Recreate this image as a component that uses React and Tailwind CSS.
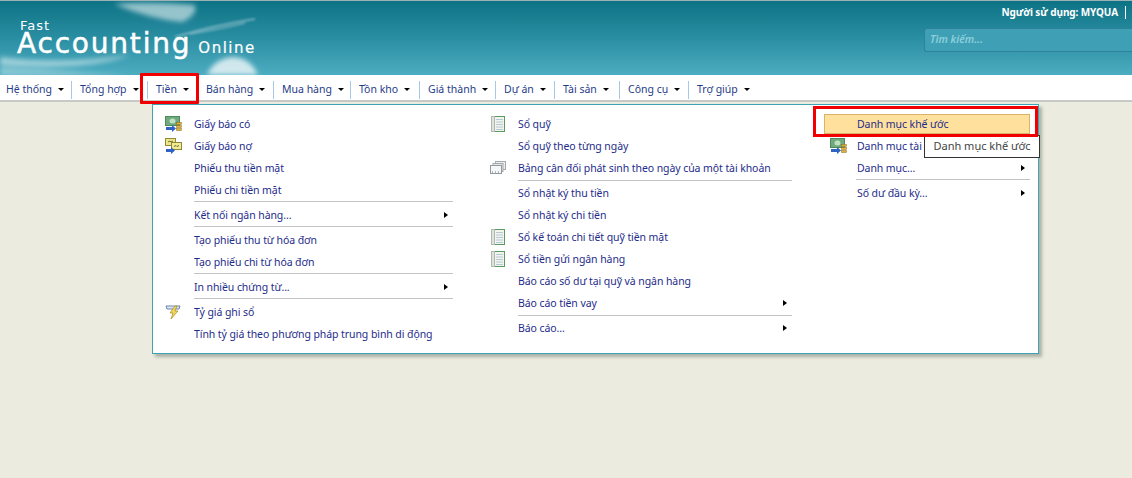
const topMenu = [
  { label: "Hệ thống", width: "w-[72px]", pad: "pl-[6px]" },
  { label: "Tổng hợp", width: "w-[76px]", pad: "pl-[8px]" },
  { label: "Tiền", width: "w-[50px]", pad: "pl-[8px]" },
  { label: "Bán hàng", width: "w-[76px]", pad: "pl-[8px]" },
  { label: "Mua hàng", width: "w-[77px]", pad: "pl-[8px]" },
  { label: "Tồn kho", width: "w-[69px]", pad: "pl-[8px]" },
  { label: "Giá thành", width: "w-[76px]", pad: "pl-[8px]" },
  { label: "Dự án", width: "w-[59px]", pad: "pl-[8px]" },
  { label: "Tài sản", width: "w-[65px]", pad: "pl-[8px]" },
  { label: "Công cụ", width: "w-[69px]", pad: "pl-[8px]" },
  { label: "Trợ giúp", width: "w-[70px]", pad: "pl-[8px]", last: true },
];

const col1 = [
  { label: "Giấy báo có", icon: "money" },
  { label: "Giấy báo nợ", icon: "notes" },
  { label: "Phiếu thu tiền mặt" },
  { label: "Phiếu chi tiền mặt" },
  { sep: true },
  { label: "Kết nối ngân hàng...", more: true },
  { sep: true },
  { label: "Tạo phiếu thu từ hóa đơn" },
  { label: "Tạo phiếu chi từ hóa đơn" },
  { sep: true },
  { label: "In nhiều chứng từ...", more: true },
  { sep: true },
  { label: "Tỷ giá ghi sổ", icon: "bolt" },
  { label: "Tính tỷ giá theo phương pháp trung bình di động" },
];

const col2 = [
  { label: "Sổ quỹ", icon: "book" },
  { label: "Sổ quỹ theo từng ngày" },
  { label: "Bảng cân đối phát sinh theo ngày của một tài khoản", icon: "windows" },
  { sep: true },
  { label: "Sổ nhật ký thu tiền" },
  { label: "Sổ nhật ký chi tiền" },
  { label: "Sổ kế toán chi tiết quỹ tiền mặt", icon: "book" },
  { label: "Sổ tiền gửi ngân hàng", icon: "book" },
  { label: "Báo cáo số dư tại quỹ và ngân hàng" },
  { label: "Báo cáo tiền vay", more: true },
  { sep: true },
  { label: "Báo cáo...", more: true },
];

const col3 = [
  { label: "Danh mục khế ước", active: true },
  { label: "Danh mục tài", icon: "money" },
  { label: "Danh mục...", more: true },
  { sep: true },
  { label: "Số dư đầu kỳ...", more: true },
];

function MenuIcon({ name }) {
  if (name === "money") {
    return (
      <svg width="17" height="16" viewBox="0 0 17 16">
        <rect x="0.5" y="0.5" width="14" height="9" fill="#6fa97c" stroke="#4d8a60" />
        <ellipse cx="7.5" cy="5" rx="3" ry="2.5" fill="#bfe0c2" />
        <path d="M1 11h6V9l4 3.5L7 16v-2H1z" fill="#2f62c4" />
        <rect x="11.5" y="6.5" width="5" height="2" fill="#e3b23c" stroke="#8a6a1c" strokeWidth="0.5" />
        <rect x="11.5" y="9.5" width="5" height="2" fill="#e3b23c" stroke="#8a6a1c" strokeWidth="0.5" />
        <rect x="11.5" y="12.5" width="5" height="2" fill="#e3b23c" stroke="#8a6a1c" strokeWidth="0.5" />
      </svg>
    );
  }
  if (name === "notes") {
    return (
      <svg width="17" height="16" viewBox="0 0 17 16">
        <rect x="0.5" y="0.5" width="10" height="7" fill="#efe58a" stroke="#8f8a3a" />
        <rect x="6.5" y="4.5" width="10" height="7" fill="#f3ea94" stroke="#8f8a3a" />
        <path d="M3 4l2-1 1 1 2-1M9 8.5l2-1 1 1 2-1" stroke="#66702c" fill="none" />
        <path d="M1 11h5V9l4 3.5L6 16v-2H1z" fill="#2f62c4" />
      </svg>
    );
  }
  if (name === "bolt") {
    return (
      <svg width="17" height="16" viewBox="0 0 17 16">
        <path d="M1 2h14l-1 3H2z" fill="#dfe8f5" stroke="#6d86ab" />
        <path d="M10 2L5 9h3l-2 6 7-8h-3l2-5z" fill="#f2d65a" stroke="#a58a2a" strokeWidth="0.7" />
      </svg>
    );
  }
  if (name === "book") {
    return (
      <svg width="14" height="16" viewBox="0 0 14 16">
        <rect x="1.5" y="0.5" width="12" height="15" fill="#f1f5ee" stroke="#5c9a63" />
        <rect x="0.5" y="0.5" width="3" height="15" fill="#dfe3df" stroke="#b0b8b0" />
        <path d="M5 3.5h7M5 6h7M5 8.5h7M5 11h7M5 13.5h7" stroke="#b6c8d6" />
      </svg>
    );
  }
  return (
    <svg width="16" height="14" viewBox="0 0 16 14">
      <rect x="5.5" y="0.5" width="10" height="8" fill="#eceff2" stroke="#a3a9ad" />
      <rect x="3" y="2.5" width="10" height="8" fill="#e3e7ea" stroke="#a3a9ad" />
      <rect x="0.5" y="4.5" width="11" height="8" fill="#f5f6f7" stroke="#94999d" />
      <path d="M2 11h1M5 11h1M8 11h1" stroke="#777" />
    </svg>
  );
}

function MenuRow({ item, slot, sepClass }) {
  if (item.sep) {
    return <div className={`h-px bg-[#c4c4c4] ${slot === "w-[33px]" ? "ml-[32px]" : "ml-[36px]"} ${sepClass}`} />;
  }
  return (
    <div
      className={`flex items-center ${
        item.active ? "my-px h-[20px] border border-[#d8b368] bg-[#ffe09c]" : "h-[22px]"
      }`}
    >
      <span className={`${slot} flex shrink-0 justify-center pr-[5px] ${item.active ? "-mr-px" : ""}`}>
        {item.icon && <MenuIcon name={item.icon} />}
      </span>
      <span className="flex-1 overflow-hidden whitespace-nowrap pt-px">{item.label}</span>
      {item.more && (
        <span className="mr-[5px] h-0 w-0 border-y-[3.5px] border-l-[4px] border-y-transparent border-l-black" />
      )}
    </div>
  );
}

function MenuColumn({ items, width, slot = "w-[36px]", sepClass = "my-px" }) {
  return (
    <div className={`${width} shrink-0`}>
      {items.map((item, i) => (
        <MenuRow key={i} item={item} slot={slot} sepClass={sepClass} />
      ))}
    </div>
  );
}

export default function App() {
  return (
    <div className="relative min-h-screen overflow-hidden bg-[#ecebe0] font-['Noto_Sans',sans-serif] text-[10.5px] tracking-[-0.08px] text-[#1e2c8a]">
      <header className="relative h-[75px] overflow-hidden border-t border-[#9fb1b4] bg-gradient-to-b from-[#0b7385] via-[#2a8ea3] to-[#4cacc0]">
        <svg className="absolute inset-0" width="300" height="75" viewBox="0 0 300 75">
          <defs>
            <filter id="soft"><feGaussianBlur stdDeviation="2.5" /></filter>
            <filter id="softer"><feGaussianBlur stdDeviation="1.2" /></filter>
          </defs>
          <g filter="url(#soft)" fill="#ffffff">
            <path d="M114 3 Q150 0 195 4 Q198 14 182 21 Q150 18 114 3z" opacity="0.55" />
            <path d="M207 74 Q214 58 232 56 Q250 56 258 74z" opacity="0.75" />
            <path d="M0 56 Q60 64 130 54 Q90 70 0 64z" opacity="0.5" />
            <path d="M0 66 Q40 68 130 74 L0 75z" opacity="0.35" />
          </g>
          <g filter="url(#softer)" stroke="#ffffff" fill="none" opacity="0.35">
            <path d="M175 36 Q215 24 255 18" strokeWidth="2" />
            <path d="M190 33 Q220 28 245 22" strokeWidth="1.5" />
          </g>
        </svg>
        <div className="relative flex h-full justify-between">
          <div className="pl-[17px] pt-[19px] font-['DejaVu_Sans',sans-serif] text-white">
            <div className="pl-[3px] text-[13px] leading-[11px] tracking-[1px]">Fast</div>
            <div className="mt-px flex items-baseline">
              <span className="text-[28px] leading-[24px] tracking-[1.8px] [-webkit-text-stroke:0.5px_white]">Accounting</span>
              <span className="ml-[7px] text-[15px] leading-[24px] tracking-[1.5px] [-webkit-text-stroke:0.2px_white]">Online</span>
            </div>
          </div>
          <div className="flex flex-col items-end">
            <div className="flex h-[22px] items-center text-[10px] font-bold tracking-[-0.1px] text-white">
              <span>Người sử dụng: MYQUA</span>
              <span className="ml-[7px] mr-[6px] h-[13px] w-px bg-white" />
            </div>
            <div className="mt-[5px] flex h-[24px] w-[208px] items-center rounded-l-[3px] border border-r-0 border-[#2f8296] bg-[#3fa0b5] pl-[5px] font-semibold italic tracking-normal text-[#8ccfdc]">
              Tìm kiếm...
            </div>
          </div>
        </div>
      </header>

      <nav className="flex h-[27px] items-center border-b-2 border-[#c6c9c6] bg-white pt-[4px] tracking-normal text-[#1f3c88]">
        {topMenu.map((m) => (
          <div
            key={m.label}
            className={`flex h-[18px] items-center ${m.width} ${m.pad} ${m.last ? "" : "border-r border-[#a9c8e8]"}`}
          >
            <span className="whitespace-nowrap">{m.label}</span>
            <span className="ml-[6px] h-0 w-0 border-x-[3px] border-t-[3px] border-x-transparent border-t-black" />
          </div>
        ))}
      </nav>

      {/* dropdown */}
      <div className="absolute left-[152px] top-[104px] flex h-[250px] w-[887px] border border-[#3fa3b5] bg-white pl-[5px] pt-[8px] shadow-[3px_3px_3px_rgba(90,110,100,0.45)]">
        <MenuColumn items={col1} width="w-[295px]" sepClass="mb-[2px]" />
        <div className="ml-[29px]">
          <MenuColumn items={col2} width="w-[310px]" />
        </div>
        <div className="ml-[32px]">
          <MenuColumn items={col3} width="w-[206px]" slot="w-[33px]" sepClass="mb-[2px]" />
        </div>
      </div>

      {/* tooltip */}
      <div className="absolute left-[924px] top-[135px] flex h-[23px] w-[116px] items-center justify-center whitespace-nowrap border border-[#333] bg-white text-[11px] tracking-normal text-[#444]">
        Danh mục khế ước
      </div>

      {/* red highlight boxes */}
      <div className="absolute left-[140px] top-[73px] h-[31px] w-[59px] rounded-[1px] border-[3px] border-[#f00000]" />
      <div className="absolute left-[813px] top-[106px] h-[31px] w-[225px] border-[3px] border-[#f00000]" />
    </div>
  );
}
